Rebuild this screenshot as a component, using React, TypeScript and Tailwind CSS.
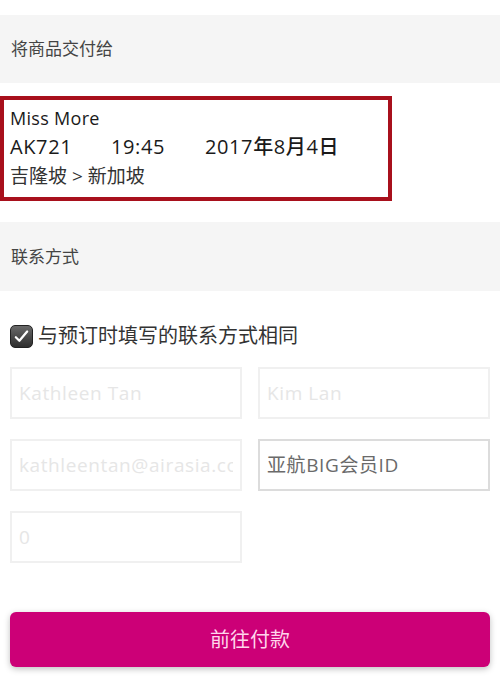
import React from 'react';

const font = { fontFamily: '"Open Sans", "Noto Sans CJK SC", sans-serif' };

const Field: React.FC<{ text: string; filled?: boolean }> = ({ text, filled }) => (
  <input
    readOnly
    placeholder={text}
    className={`h-[52px] w-full min-w-0 px-[7px] bg-white border-2 outline-none ${
      filled ? 'border-[#dcdcdc] placeholder:text-[#6a6a6a]' : 'border-[#f0f0f0] placeholder:text-[#e6e6e6]'
    } text-[19px] tracking-[0.6px]`}
    style={font}
  />
);

const App: React.FC = () => {
  return (
    <div className="w-[500px] h-[688px] bg-white text-[#222] overflow-hidden" style={font}>
      {/* Deliver to */}
      <div className="pt-[15px]">
        <div className="h-[68px] bg-[#f5f5f5] flex items-center px-[11px] text-[17px] text-[#444]">
          将商品交付给
        </div>
      </div>

      <div className="pt-[13px] pb-[21px]">
        <div className="w-[392px] h-[105px] border-4 border-[#a8101c] px-[6px] pt-[6px] flex flex-col">
          <div className="text-[18px] leading-[25px] text-[#1a1a1a] tracking-[0.3px]">Miss More</div>
          <div className="flex text-[20px] leading-[32px] font-medium text-[#1a1a1a] tracking-[0.6px]">
            <span className="w-[101px]">AK721</span>
            <span className="w-[94px]">19:45</span>
            <span>2017年8月4日</span>
          </div>
          <div className="text-[19px] leading-[26px] text-[#333]">吉隆坡 &gt; 新加坡</div>
        </div>
      </div>

      {/* Contact */}
      <div className="h-[69px] bg-[#f5f5f5] flex items-center px-[11px] text-[17px] text-[#444]">
        联系方式
      </div>

      <div className="px-[10px] pt-[30px]">
        <div className="flex items-center gap-[5px]">
          <div className="w-[23px] h-[23px] rounded-[5px] bg-gradient-to-b from-[#6a6a6a] to-[#2e2e2e] border border-[#222] flex items-center justify-center">
            <svg width="17" height="17" viewBox="0 0 24 24" fill="none" stroke="white" strokeWidth="3.2" strokeLinecap="round" strokeLinejoin="round">
              <path d="M4 13l5 5L20 5" />
            </svg>
          </div>
          <span className="text-[20px] text-[#333]">与预订时填写的联系方式相同</span>
        </div>

        <div className="grid grid-cols-2 gap-x-[16px] gap-y-[20px] mt-[16px]">
          <Field text="Kathleen Tan" />
          <Field text="Kim Lan" />
          <Field text="kathleentan@airasia.com" />
          <Field text="亚航BIG会员ID" filled />
          <Field text="0" />
        </div>

        <button className="mt-[49px] w-full h-[55px] rounded-[6px] bg-[#cc0077] text-[#ffd6ec] text-[20px] shadow-[0_2px_6px_rgba(0,0,0,0.25)]">
          前往付款
        </button>
      </div>
    </div>
  );
};

export default App;
